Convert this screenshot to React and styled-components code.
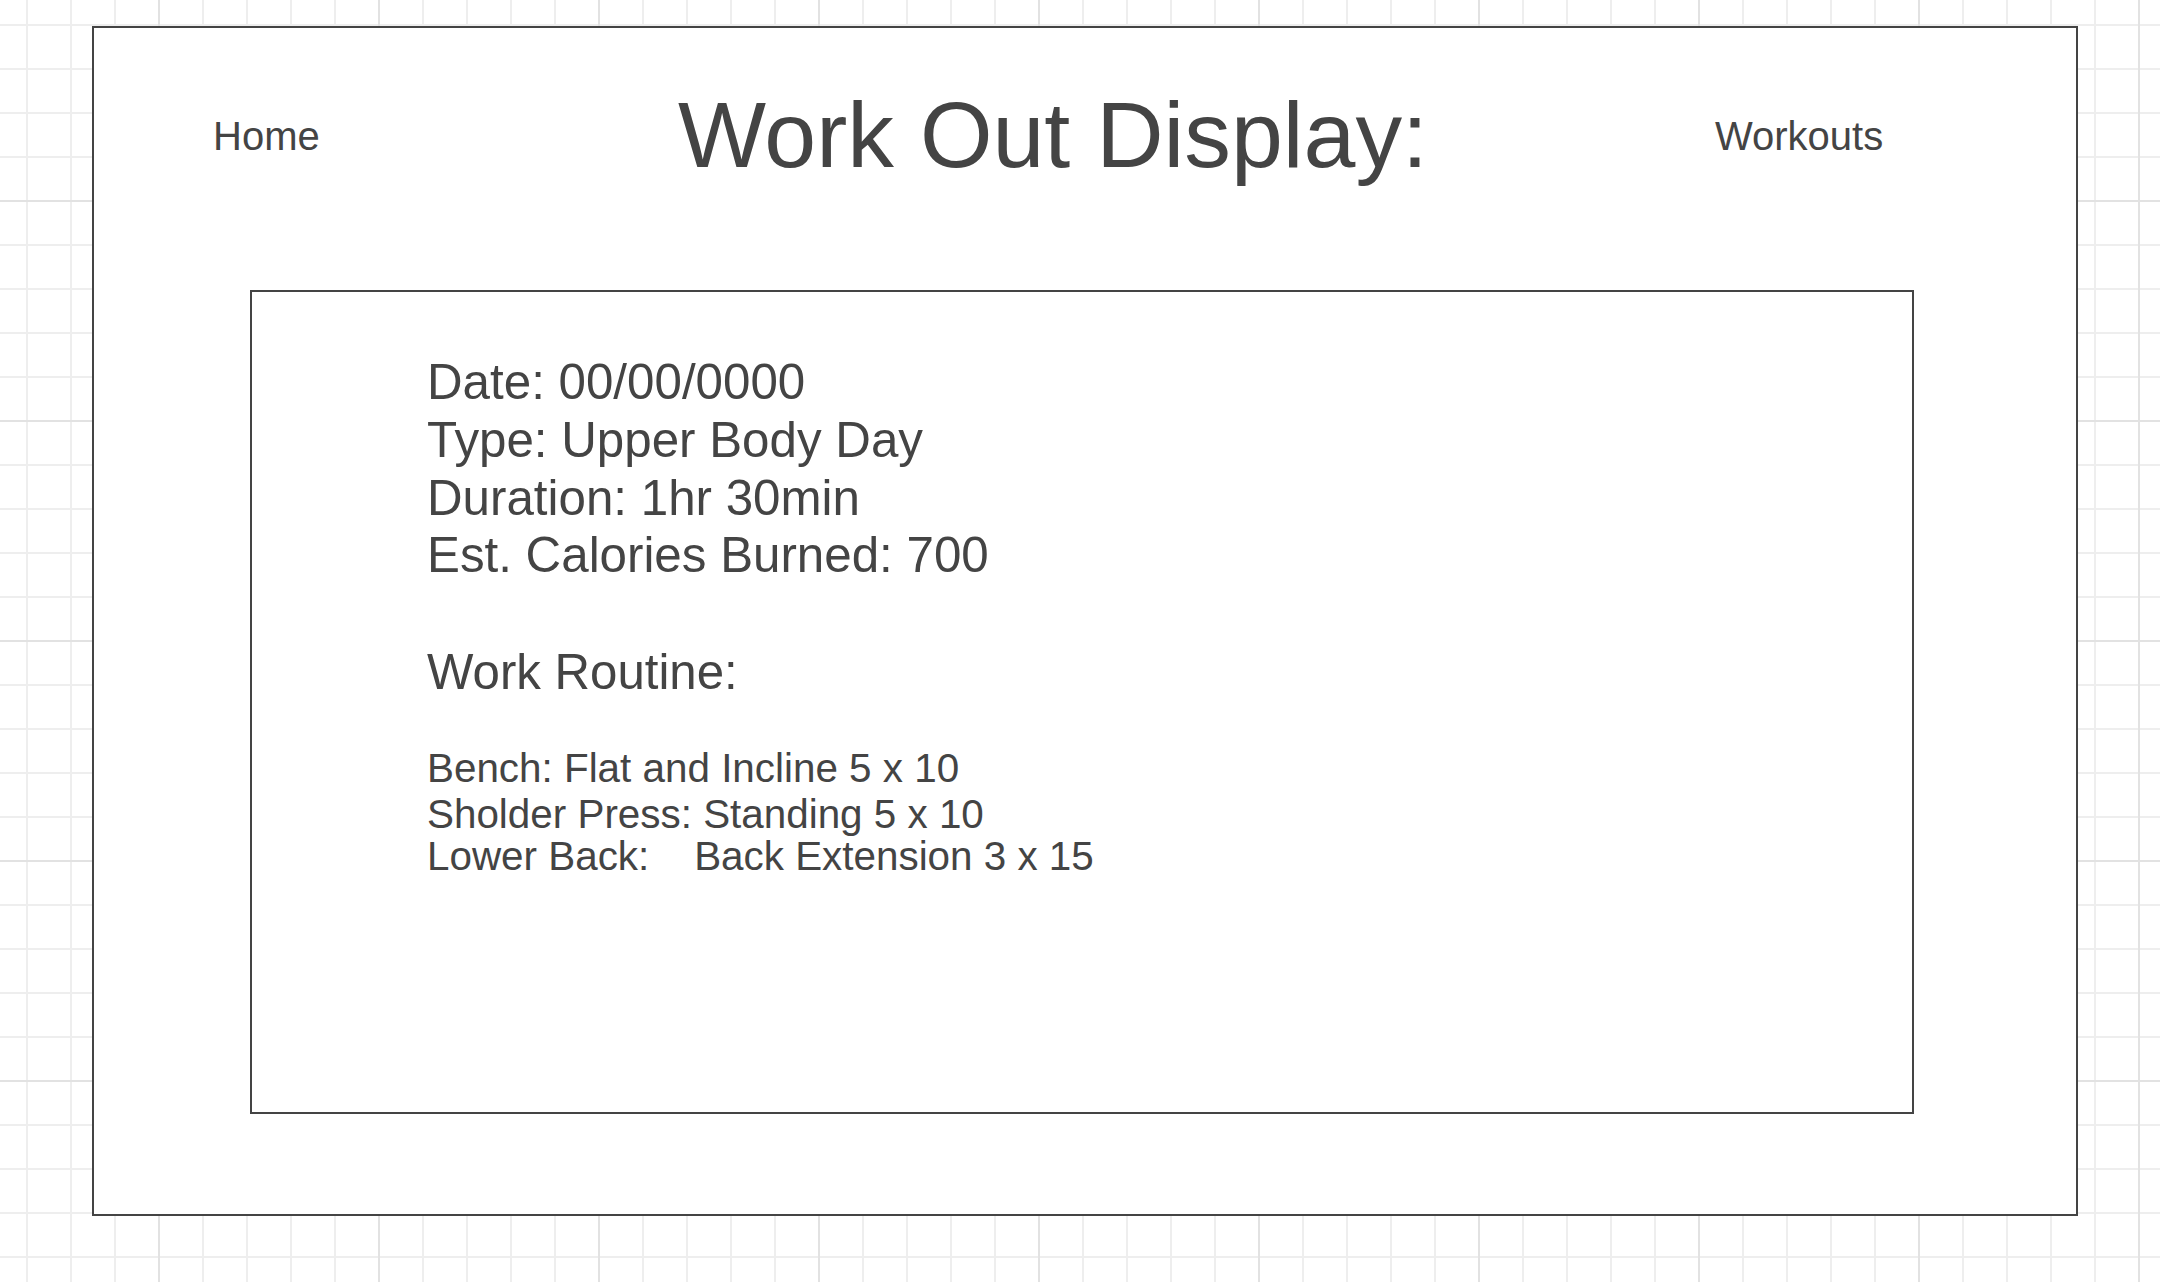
import React from "react";
import styled, { createGlobalStyle } from "styled-components";

const GlobalStyle = createGlobalStyle`
  html, body {
    margin: 0;
    padding: 0;
  }
  body {
    min-height: 100vh;
    font-family: "Liberation Sans", Arial, sans-serif;
    color: #444;
    background-color: #fff;
    background-image:
      linear-gradient(to right, #e2e2e2 2px, transparent 2px),
      linear-gradient(to bottom, #e2e2e2 2px, transparent 2px),
      linear-gradient(to right, #eeeeee 2px, transparent 2px),
      linear-gradient(to bottom, #eeeeee 2px, transparent 2px);
    background-size: 220px 220px, 220px 220px, 44px 44px, 44px 44px;
    background-position: 158px 0, 0 200px, 26px 0, 0 24px;
  }
`;

const Page = styled.div`
  padding: 26px 0 0 92px;
`;

const Frame = styled.div`
  box-sizing: border-box;
  width: 1986px;
  height: 1190px;
  border: 2px solid #444;
  background: #fff;
`;

const Header = styled.header`
  display: grid;
  grid-template-columns: 465px 1037px auto;
  align-items: center;
  height: 216px;
  padding-left: 119px;
  line-height: 1;
`;

const NavLink = styled.span`
  font-size: 40px;
  color: #444;
  white-space: nowrap;
`;

const Title = styled.h1`
  margin: 0;
  font-size: 93.3px;
  font-weight: 400;
  white-space: nowrap;
`;

const Card = styled.section`
  box-sizing: border-box;
  width: 1664px;
  height: 824px;
  margin: 46px 0 0 156px;
  padding: 61px 0 0 175px;
  border: 2px solid #444;
`;

const Detail = styled.div`
  font-size: 49.3px;
  line-height: 57.8px;
  white-space: nowrap;
`;

const SectionTitle = styled.div`
  margin-top: 58.5px;
  font-size: 49.2px;
  line-height: 57.8px;
`;

const RoutineList = styled.div`
  margin-top: 46.5px;
`;

const RoutineLine = styled.div`
  margin-top: ${(p) => p.$gap || 0}px;
  font-size: 40.4px;
  line-height: 42px;
  white-space: pre;
`;

const details = [
  "Date: 00/00/0000",
  "Type: Upper Body Day",
  "Duration: 1hr 30min",
  "Est. Calories Burned: 700",
];

const routine = [
  { text: "Bench: Flat and Incline 5 x 10", gap: 0 },
  { text: "Sholder Press: Standing 5 x 10", gap: 3.6 },
  { text: "Lower Back:    Back Extension 3 x 15", gap: 0 },
];

export default function App() {
  return (
    <>
      <GlobalStyle />
      <Page>
        <Frame>
          <Header>
            <NavLink>Home</NavLink>
            <Title>Work Out Display:</Title>
            <NavLink>Workouts</NavLink>
          </Header>
          <Card>
            {details.map((d) => (
              <Detail key={d}>{d}</Detail>
            ))}
            <SectionTitle>Work Routine:</SectionTitle>
            <RoutineList>
              {routine.map((r) => (
                <RoutineLine key={r.text} $gap={r.gap}>
                  {r.text}
                </RoutineLine>
              ))}
            </RoutineList>
          </Card>
        </Frame>
      </Page>
    </>
  );
}
